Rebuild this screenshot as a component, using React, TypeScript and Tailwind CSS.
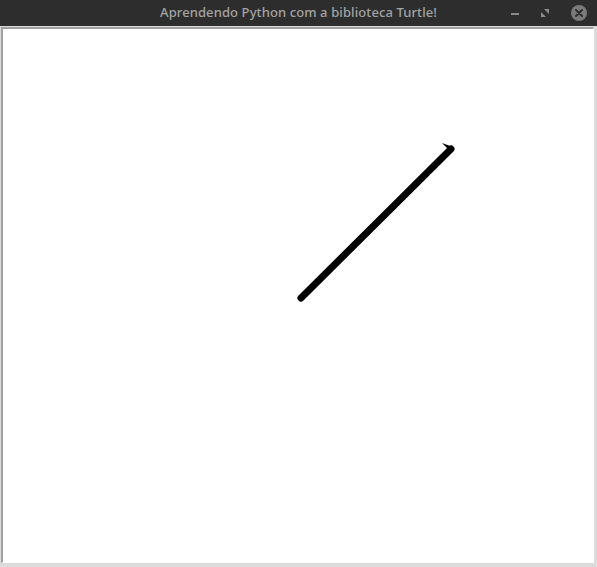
export default function App() {
  return (
    <div className="w-[597px] h-[567px] flex flex-col bg-[#dcdcdc] overflow-hidden">
      {/* Title bar */}
      <div className="h-[26px] shrink-0 bg-[#2d2d2d] relative flex items-center justify-center">
        <span
          className="text-[13px] font-medium text-[#a3a3a3] tracking-[0.1px]"
          style={{ fontFamily: '"Noto Sans", "DejaVu Sans", sans-serif' }}
        >
          Aprendendo Python com a biblioteca Turtle!
        </span>
        <div className="absolute right-[9px] top-0 h-[26px] flex items-center gap-[20px]">
          <svg width="10" height="10" viewBox="0 0 10 10">
            <rect x="1" y="5" width="8" height="2" fill="#8a8a8a" />
          </svg>
          <svg width="10" height="10" viewBox="0 0 10 10">
            <path d="M4 1h5v5z M1 4l5 5H1z" fill="#8a8a8a" />
          </svg>
          <svg width="18" height="18" viewBox="0 0 18 18">
            <circle cx="9" cy="9" r="8" fill="#7a7a7a" />
            <path d="M6 6l6 6M12 6l-6 6" stroke="#2d2d2d" strokeWidth="2" strokeLinecap="round" />
          </svg>
        </div>
      </div>
      {/* Canvas area */}
      <div className="flex-1 pt-[1px] pl-[1px] pr-[3px] pb-[4px] flex">
        <div className="flex-1 border-t-2 border-l-2 border-[#a0a0a0] border-r border-b border-r-white border-b-white bg-white relative">
          <svg className="absolute inset-0" width="100%" height="100%">
            <line x1="298" y1="269" x2="448" y2="120" stroke="#000" strokeWidth="7" strokeLinecap="round" />
            <polygon points="450,118 439,114 444,119 445,124" fill="#000" />
          </svg>
        </div>
      </div>
    </div>
  );
}
